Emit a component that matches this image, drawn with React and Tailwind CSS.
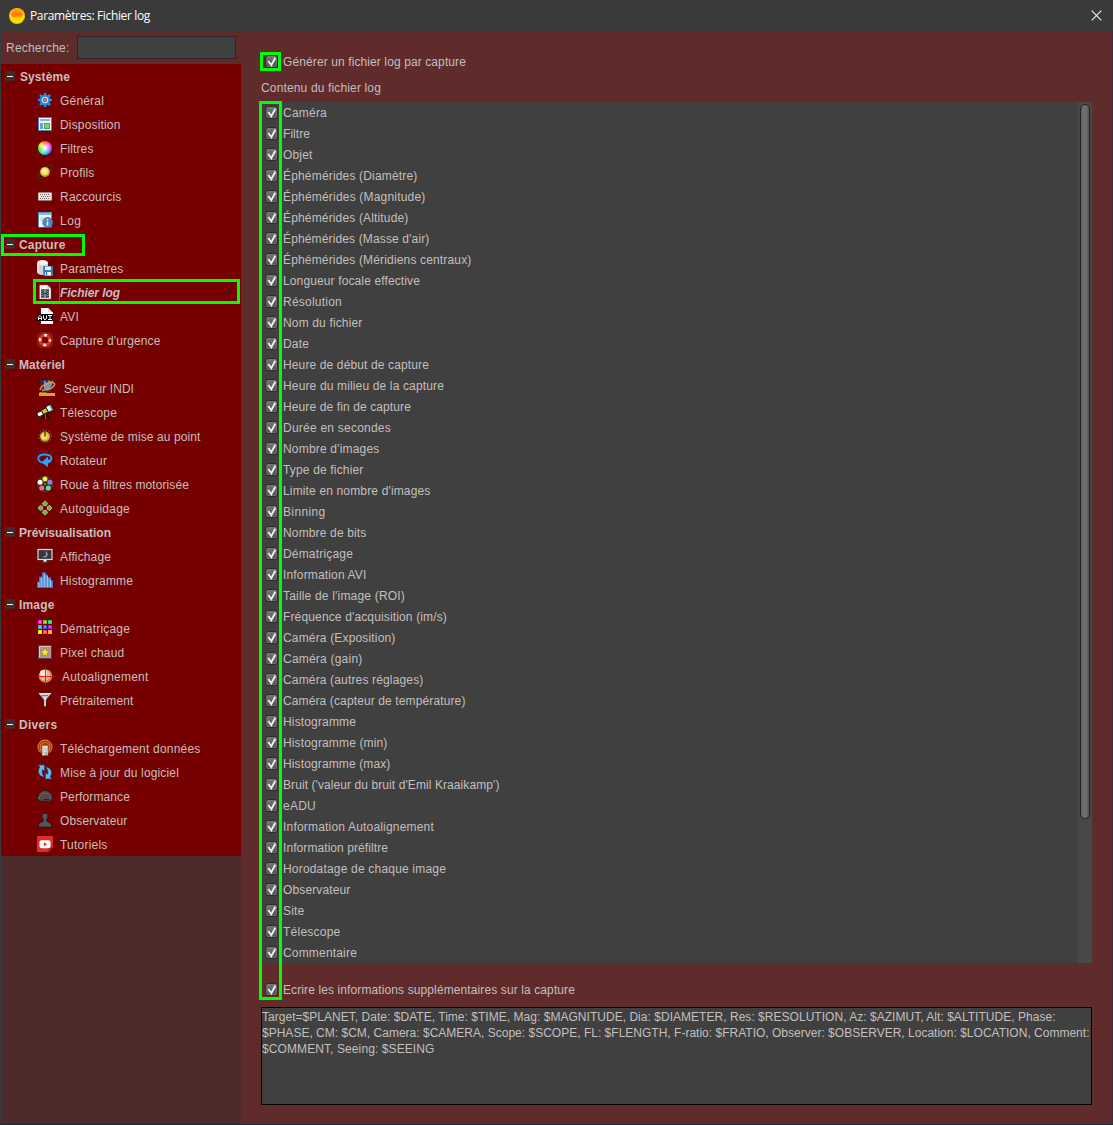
import React, { useLayoutEffect, useRef, useState } from 'react';

/* Text set to a given width by distributing tracking between its letters. */
function Label({ w, className = '', children }) {
  const ref = useRef(null);
  const [spacing, setSpacing] = useState(0);
  useLayoutEffect(() => {
    const natural = ref.current.getBoundingClientRect().width;
    setSpacing((w - natural) / children.length);
  }, []);
  return (
    <span ref={ref} className={`whitespace-pre ${className}`} style={{ letterSpacing: `${spacing}px` }}>
      {children}
    </span>
  );
}

const grid9 = ['#ff10e8', '#78c000', '#10d860', '#20a8ff', '#2058e8', '#a010f8', '#ffd800', '#f04830', '#ffa030'];

const icons = {
  gear: (
    <>
      <g stroke="#1491ee" strokeWidth="2.6">
        <path d="M8 1V15M1 8H15M3 3l10 10M13 3l-10 10" />
      </g>
      <circle cx="8" cy="8" r="5.2" fill="#168fe8" />
      <circle cx="8" cy="8" r="2.6" fill="#7c3f55" stroke="#d3d3dc" strokeWidth="1.3" />
      <circle cx="8" cy="8" r="1" fill="#c2a9af" />
    </>
  ),
  layout: (
    <>
      <rect x="1" y="1" width="14" height="14" fill="#4a7fc4" />
      <rect x="2" y="2" width="12" height="12" fill="#f4f8ff" />
      <rect x="3" y="3" width="10" height="2" fill="#86b2ee" />
      <rect x="3" y="7" width="3" height="6" fill="#6c9fe0" />
      <rect x="7" y="7" width="6" height="6" fill="#46a843" />
      <rect x="8" y="8" width="4" height="4" fill="#85cf73" />
    </>
  ),
  log: (
    <>
      <rect x="1" y="0" width="14" height="15.5" fill="#5a91c6" />
      <rect x="2" y="3" width="12" height="12" fill="#f3f7fb" />
      <rect x="2" y="1" width="12" height="2" fill="#87b8e8" />
      <path d="M3 6h6M3 8h3" stroke="#b6c2cf" />
      <circle cx="10.7" cy="10.5" r="5" fill="#5189ba" stroke="#396c9b" strokeWidth=".7" />
      <path d="M10.5 9.5v4M10.5 7v1.3" stroke="#fff" strokeWidth="1.5" />
    </>
  ),
  planet: (
    <>
      <ellipse cx="8" cy="8" rx="9.3" ry="3" transform="rotate(-43 8 8)" fill="#401008" stroke="#63270d" />
      <circle cx="8" cy="8" r="5" fill="#c99b18" />
      <circle cx="7.7" cy="7.3" r="3.9" fill="#f7df62" />
      <circle cx="7.2" cy="6.6" r="2.1" fill="#fff6a8" />
    </>
  ),
  keyboard: (
    <>
      <path d="M7 4V2h3" fill="none" stroke="#4b1010" />
      <rect x="1" y="4.2" width="14" height="8.5" rx="1" fill="#e6e2e0" stroke="#5f2929" strokeWidth=".5" />
      <g stroke="#706b6b" strokeDasharray="1 1">
        <path d="M3 6.5h10M4 8.5h9M3 10.5h10" />
      </g>
    </>
  ),
  save: (
    <>
      <path d="M0 3C0-1 11-1 11 3v9c0 4-11 4-11 0z" fill="#d4d1cf" />
      <ellipse cx="5.5" cy="2.7" rx="5" ry="2.2" fill="#faf7f4" />
      <path d="M1 4v8" stroke="#fff" />
      <rect x="6.3" y="6" width="9.7" height="10" fill="#3674bd" />
      <rect x="8" y="6.5" width="6" height="3.6" fill="#dcefff" />
      <rect x="8" y="12" width="6" height="3.5" fill="#f5f9fb" />
      <path d="M9.5 12v3.5" stroke="#3674bd" strokeWidth="1.3" />
    </>
  ),
  filelog: (
    <>
      <path d="M2.5 1h8L14 4.3V15H2.5z" fill="#f3f4f4" stroke="#686868" strokeWidth=".5" />
      <path d="M10.5 1v3.5H14" fill="#b9bcbd" />
      <rect x="4" y="5" width="8" height="9" fill="#32383a" />
      <rect x="6.5" y="5" width="3" height="4" fill="#7c8a90" />
      <rect x="6.5" y="10" width="3" height="4" fill="#7c8a90" />
      <path d="M5 5v9M11 5v9" stroke="#ddd" strokeWidth=".9" strokeDasharray="1 1" />
    </>
  ),
  avi: (
    <>
      <path d="M4 0h7l4 4h1v12H4z" fill="#fff" />
      <path d="M11 0v4h4z" fill="#dadada" />
      <rect x="0" y="6" width="16" height="7" fill="#050505" />
      <path d="M1.5 12V9L3 7.5 4.5 9v3M1.5 10.5h3M6.5 7.5V10L8 12l1.5-2V7.5M11 7.5h4M13 7.5v4M11 11.5h4" fill="none" stroke="#fff" />
    </>
  ),
  buoy: (
    <>
      <rect x="1" y="1" width="14" height="14" rx="3" fill="#6b1005" stroke="#a6430d" strokeWidth=".8" />
      <circle cx="8" cy="8" r="4.9" fill="none" stroke="#e0302a" strokeWidth="3.4" />
      <circle cx="8" cy="8" r="4.9" fill="none" stroke="#ffe6e2" strokeWidth="2.6" strokeDasharray="2.8 4.9" strokeDashoffset="1.4" />
      <circle cx="8" cy="8" r="2.8" fill="#790000" />
    </>
  ),
  indi: (
    <>
      <path d="M1 0h14v8l-4 4-8-1z" fill="#273052" />
      <path d="M5 0l3 3 2-3 2 2 2-2-1 5-4 6-4-2z" fill="#7b94bb" />
      <path d="M1 10C2 5 12 1 15 3s-4 8-12 7" fill="none" stroke="#f3942c" strokeWidth="1.4" />
      <path d="M0 13l5-2 3 2h8v3H0z" fill="#e99a28" />
      <path d="M3 12l8-1 2 1" stroke="#37294d" strokeWidth="1.5" fill="none" />
    </>
  ),
  telescope: (
    <>
      <path d="M7.5 9l-2 6M9 9l3 6M8.5 9v6" stroke="#111" strokeWidth="1.3" />
      <path d="M8.5 10v5" stroke="#a4a4a4" strokeWidth=".6" />
      <g transform="rotate(-28 8 7)">
        <rect x="-.5" y="5" width="6" height="4.5" fill="#fff" stroke="#171717" />
        <rect x="5" y="4.5" width="6" height="5" fill="#f5b32a" stroke="#171717" />
        <rect x="10.5" y="3.5" width="5.5" height="6.5" fill="#fff" stroke="#171717" />
        <path d="M15 4v6" stroke="#49b1b7" strokeWidth="1.5" />
      </g>
    </>
  ),
  focus: (
    <>
      <circle cx="8" cy="8" r="6.3" fill="none" stroke="#4769a1" strokeWidth="1.2" strokeDasharray="1.2 2.1" />
      <circle cx="8" cy="8.7" r="5.3" fill="#80570d" />
      <circle cx="8" cy="8.3" r="4.8" fill="#dcb42a" />
      <circle cx="7.3" cy="8.5" r="3.2" fill="#f3dd68" />
      <path d="M8 3.5v5" stroke="#56420b" strokeWidth="1.5" />
    </>
  ),
  rotate: (
    <>
      <path d="M6 10.5C-1 9.500 0 2.500 7.500 2.500s8 4.500 5.500 6.500" fill="none" stroke="#1f9bff" strokeWidth="2" />
      <path d="M4.500 10.500L11 4.500V7.500H14V10L11 11.500V15z" fill="#2a9fff" />
    </>
  ),
  wheel: (
    <>
      <circle cx="8" cy="8" r="7.6" fill="#322b29" stroke="#5a4640" strokeWidth=".8" />
      <circle cx="8" cy="8" r="1.3" fill="#806348" />
      <circle cx="8" cy="2.9" r="2.5" fill="#eded45" />
      <circle cx="12.900" cy="6.300" r="2.5" fill="#8f82df" />
      <circle cx="11.3" cy="12" r="2.5" fill="#69dc86" />
      <circle cx="4.8" cy="12" r="2.5" fill="#f16e6c" />
      <circle cx="3.100" cy="6.3" r="2.5" fill="#fff" />
    </>
  ),
  guide: (
    <g fill="#5cc02a" stroke="#b9c4b4" strokeWidth=".9">
      <path d="M8 1l2.600 2.400L9.300 5.600H6.700L5.400 3.400z" />
      <path d="M15 8l-2.400 2.600-2.200-1.300V6.700l2.200-1.300z" />
      <path d="M8 15l-2.600-2.400 1.300-2.200h2.600l1.300 2.200z" />
      <path d="M1 8l2.400-2.600 2.200 1.300v2.600l-2.200 1.300z" />
    </g>
  ),
  screen: (
    <>
      <rect x="1" y="1.5" width="14" height="10" fill="#34383d" stroke="#d9d6d6" strokeWidth="1.2" />
      <path d="M8 3.2a3.2 3.2 0 1 1-2.8 5.3C9 9 10 6 8 3.2" fill="#9299ab" />
      <path d="M8 12v2" stroke="#eee" strokeWidth="3" />
      <path d="M4 14.5h8" stroke="#423333" strokeWidth="1.5" />
    </>
  ),
  histogram: (
    <>
      <path d="M.5 15.5V10h2V5h3V.8h3v2h2v3h3v3h2v6.7z" fill="#5f95d8" stroke="#3d75cc" />
      <path d="M2 10.5V15M4.5 6v9M7.5 2v13M10.5 4v11M13.5 7.5V15" stroke="#9abfeb" />
    </>
  ),
  mosaic: grid9.map((c, i) => (
    <g key={c}>
      <rect x={1 + (i % 3) * 5} y={Math.floor(i / 3) * 5} width="4" height="4" fill={c} />
      <rect x={2 + (i % 3) * 5} y={1 + Math.floor(i / 3) * 5} width="2" height="2" fill="#fff" opacity=".35" />
    </g>
  )),
  star: (
    <>
      <rect x="1.5" y="1.5" width="13" height="13" fill="#b0939a" stroke="#573b4f" />
      <path d="M2.5 13.5v-11h11" stroke="#dec3c5" fill="none" />
      <path d="M8 3.5l1.4 3 3.2.4-2.4 2.2.7 3.3L8 10.8l-2.9 1.6.7-3.3-2.4-2.2 3.2-.4z" fill="#f5e33c" stroke="#8b7912" strokeWidth=".6" />
    </>
  ),
  align: (
    <>
      <circle cx="8.5" cy="8" r="6.8" fill="#bd895e" />
      <circle cx="7.800" cy="7.200" r="5.5" fill="#dfba94" />
      <circle cx="6.5" cy="5.500" r="3.400" fill="#fbe8ce" />
      <path d="M8.5-.5v17M0 8.5h17" stroke="#f20b0b" strokeWidth=".9" />
    </>
  ),
  filter: (
    <>
      <path d="M1.5 1.2h13L9 8v7H7V8z" fill="#c4c4c8" stroke="#3d3030" strokeWidth=".5" />
      <path d="M2 1.7h12M8 5v9" stroke="#f5f5f5" />
      <path d="M5 3.5h6" stroke="#777" />
      <path d="M5.5 15h5" stroke="#3a1010" />
    </>
  ),
  download: (
    <>
      <circle cx="8" cy="7" r="7" fill="#9c3a12" />
      <g fill="none" stroke="#df7430" strokeWidth="1.1">
        <path d="M3.5 12.500a7 7 0 1 1 9 0M5 11a4.8 4.8 0 1 1 6 0" />
      </g>
      <path d="M5 5.500h6v10H5z" fill="#e2ded3" stroke="#75645d" strokeWidth=".6" />
      <path d="M6 8.5h4M6 10.5h4M6 12.5h4" stroke="#aaa" strokeWidth=".7" />
      <path d="M8 14h2" stroke="#35a037" />
    </>
  ),
  update: (
    <g fill="#65b7f3" stroke="#1b4e7e" strokeWidth=".7">
      <path d="M1 1h6.500v6.500L5.600 5.600C4.500 8 5 10 7.200 13 1.500 12.500 0 7 3 3z" />
      <path d="M15 15H8.500V8.500l1.900 1.900C11.500 8 11 6 8.800 3c5.700.5 7.200 6 4.200 10z" />
    </g>
  ),
  gauge: (
    <>
      <path d="M.8 11.8C0 6 4 2.5 8 2.5S16 6 15.2 11.8L13 13.2H3z" fill="#4a4b4d" stroke="#191919" strokeWidth=".8" />
      <path d="M2.5 10.3c.5-7 10.5-7 11 0" fill="none" stroke="#929292" strokeDasharray="1 1.5" />
      <path d="M4 5l6 7" stroke="#c82b25" />
      <path d="M7 11.5h5" stroke="#222" />
    </>
  ),
  person: (
    <path d="M8 1.2c2.5 0 3.4 2 2.7 4.2-.3 1.2-1.3 1.8-1.2 3.3.2 1.7 4.5 1.2 5 4.6V15h-13v-1.7c.5-3.4 4.8-2.9 5-4.6.1-1.5-.9-2.1-1.2-3.3C4.6 3.2 5.5 1.2 8 1.2z" fill="#555657" stroke="#1d1d1d" strokeWidth=".9" />
  ),
  video: (
    <>
      <path d="M0 0h16v11.5L11.5 16H0z" fill="#d93128" />
      <path d="M16 11.5h-4.5V16z" fill="#98201c" />
      <rect x="2.5" y="4.2" width="11" height="8" rx="2" fill="#fff" />
      <path d="M6.8 6.2v4l3.3-2z" fill="#d93128" />
    </>
  ),
};

function Icon({ name }) {
  if (name === 'color') {
    return (
      <span className="flex size-4 items-center justify-center">
        <span className="size-3.5 rounded-full bg-[radial-gradient(circle,white_5%,transparent_65%),conic-gradient(#ff5038,#ff40c8,#8048ff,#2090ff,#20e8c0,#40f020,#e8f020,#ff5038)]" />
      </span>
    );
  }
  return <svg viewBox="0 0 16 16" className="size-4 shrink-0 overflow-visible">{icons[name]}</svg>;
}

const groups = [
  ['Système', 50, [
    ['gear', 'Général', 44], ['layout', 'Disposition', 60.5], ['color', 'Filtres', 33.5], ['planet', 'Profils', 34.5],
    ['keyboard', 'Raccourcis', 61.5], ['log', 'Log', 21.5],
  ]],
  ['Capture', 46.5, [
    ['save', 'Paramètres', 63.5], ['filelog', 'Fichier log', 60], ['avi', 'AVI', 19], ['buoy', "Capture d'urgence", 100.5],
  ]],
  ['Matériel', 46, [
    ['indi', 'Serveur INDI', 70], ['telescope', 'Télescope', 57], ['focus', 'Système de mise au point', 140.5],
    ['rotate', 'Rotateur', 47], ['wheel', 'Roue à filtres motorisée', 129], ['guide', 'Autoguidage', 70],
  ]],
  ['Prévisualisation', 92, [['screen', 'Affichage', 51], ['histogram', 'Histogramme', 73]]],
  ['Image', 35.5, [
    ['mosaic', 'Dématriçage', 70], ['star', 'Pixel chaud', 64.5], ['align', 'Autoalignement', 86.5], ['filter', 'Prétraitement', 73.5],
  ]],
  ['Divers', 38.5, [
    ['download', 'Téléchargement données', 140.5], ['update', 'Mise à jour du logiciel', 119], ['gauge', 'Performance', 70],
    ['person', 'Observateur', 67.5], ['video', 'Tutoriels', 47.5],
  ]],
];

const fields = [
  ['Caméra', 44], ['Filtre', 27], ['Objet', 29.5], ['Éphémérides (Diamètre)', 134.5], ['Éphémérides (Magnitude)', 142.5],
  ['Éphémérides (Altitude)', 125.5], ["Éphémérides (Masse d'air)", 146.5], ['Éphémérides (Méridiens centraux)', 188.5],
  ['Longueur focale effective', 137], ['Résolution', 59], ['Nom du fichier', 79.5], ['Date', 26],
  ['Heure de début de capture', 146], ['Heure du milieu de la capture', 161], ['Heure de fin de capture', 128],
  ['Durée en secondes', 108], ["Nombre d'images", 96.5], ['Type de fichier', 80.5], ["Limite en nombre d'images", 147.5],
  ['Binning', 42.5], ['Nombre de bits', 83.5], ['Dématriçage', 70], ['Information AVI', 83.5], ["Taille de l'image (ROI)", 122],
  ["Fréquence d'acquisition (im/s)", 164], ['Caméra (Exposition)', 112.5], ['Caméra (gain)', 79.5],
  ['Caméra (autres réglages)', 140.5], ['Caméra (capteur de température)', 182.5], ['Histogramme', 73],
  ['Histogramme (min)', 104.5], ['Histogramme (max)', 107.5], ["Bruit ('valeur du bruit d'Emil Kraaikamp')", 216.5], ['eADU', 33],
  ['Information Autoalignement', 151], ['Information préfiltre', 105], ['Horodatage de chaque image', 163],
  ['Observateur', 67.5], ['Site', 21.5], ['Télescope', 57.5], ['Commentaire', 74],
];

const template = [
  ['Target=$PLANET, Date: $DATE, Time: $TIME, Mag: $MAGNITUDE, Dia: $DIAMETER, Res: $RESOLUTION, Az: $AZIMUT, Alt: $ALTITUDE, Phase:', 793.5],
  ['$PHASE, CM: $CM, Camera: $CAMERA, Scope: $SCOPE, FL: $FLENGTH, F-ratio: $FRATIO, Observer: $OBSERVER, Location: $LOCATION, Comment:', 827.5],
  ['$COMMENT, Seeing: $SEEING', 172.5],
];

function Check() {
  return (
    <svg viewBox="0 0 13 13" className="size-[13px] shrink-0">
      <defs>
        <linearGradient id="box" x2="0" y2="1">
          <stop stopColor="#777" />
          <stop offset="1" stopColor="#4c4c4c" />
        </linearGradient>
      </defs>
      <rect x=".9" y=".7" width="11.400" height="11.900" rx="2" fill="url(#box)" stroke="#262626" />
      <rect x="1.800" y="1.600" width="9.600" height="10" rx="1" fill="none" stroke="#8a8a8a" strokeWidth=".6" />
      <path d="M3.300 6l3 4.200L10.300 2.800" fill="none" stroke="#f2f2f2" strokeWidth="1.8" />
    </svg>
  );
}

function CheckRow({ label, w }) {
  return (
    <div className="flex h-[21px] items-center gap-[5px] pl-1">
      <Check />
      <Label w={w}>{label}</Label>
    </div>
  );
}

function Sidebar() {
  return (
    <aside className="flex w-[241px] shrink-0 flex-col border-l border-[#363c3e] bg-[#4e2b2b]">
      <div className="flex h-[33px] shrink-0 items-center bg-[#5e2b2b] pl-[5px]">
        <Label w={63.5}>Recherche:</Label>
        <div className="ml-[7.5px] h-[23px] w-[159px] border border-[#272727] bg-[#404040]" />
      </div>
      <nav className="bg-[#760000]">
        {groups.map(([title, tw, items]) => (
          <section key={title}>
            <div className="relative flex h-6 items-center pl-1">
              <span className="flex size-[10px] items-center justify-center rounded-[2px] bg-[#472b2b]">
                <span className="h-px w-1.5 bg-[#f4f4f4]" />
              </span>
              <Label w={tw} className={title === 'Système' ? 'ml-[5px] mt-0.5 font-bold' : 'ml-1 mt-0.5 font-bold'}>{title}</Label>
              {title === 'Capture' && <span className="absolute left-0 top-[2px] h-[22px] w-[84px] border-3 border-[#00ff00]" />}
            </div>
            {items.map(([icon, label, w]) => (
              <div
                key={label}
                className={`relative flex h-6 items-center ${icon === 'indi' ? 'gap-[9px] pl-[38px]' : icon === 'align' ? 'gap-[9px] pl-9' : 'gap-[7px] pl-9'}`}
              >
                <Icon name={icon} />
                <Label w={w} className={icon === 'filelog' ? 'mt-0.5 font-bold italic' : 'mt-0.5'}>{label}</Label>
                {icon === 'filelog' && (
                  <>
                    <span className="absolute left-[58px] top-[2px] h-5 w-px bg-[#a03a3a]" />
                    <span className="absolute -top-px left-8 h-[25px] w-[207px] border-3 border-[#00ff00]" />
                  </>
                )}
              </div>
            ))}
          </section>
        ))}
      </nav>
    </aside>
  );
}

export default function App() {
  return (
    <div className="flex h-[1125px] w-[1113px] flex-col overflow-hidden border-b border-[#192c40] bg-[#5f2b2b] font-['Liberation_Sans',Arial,sans-serif] text-[12px] leading-4 text-[#c4bfbf]">
      <header className="flex h-[31px] shrink-0 items-center bg-[#3a3a3a] pl-[9px] text-white">
        <svg viewBox="0 0 16 16" className="size-4 overflow-visible">
          <circle cx="8" cy="8" r="8" fill="#ffc400" />
          <circle cx="8" cy="7.8" r="7" fill="#ffe100" />
          <path d="M1.5 6Q3 .5 8.5 1t6 5.5L12 10 8 9l-3 1-3-2z" fill="#ff9a14" />
          <path d="M3 5l4-2 1 2 4-1 1 3-3 1-2-1-3 2-2-1z" fill="#ff7a08" />
        </svg>
        <Label w={120} className="ml-[5px] mt-px font-['Open_Sans',sans-serif]">Paramètres: Fichier log</Label>
        <svg viewBox="0 0 11 11" className="ml-auto mr-[11px] size-[11px]">
          <path d="M.7.7l9.6 9.6M10.3.7L.7 10.3" stroke="#f5f5f5" strokeWidth="1.1" />
        </svg>
      </header>
      <div className="flex min-h-0 flex-1">
        <Sidebar />
        <main className="relative flex-1 border-r border-[#3c3032] pl-5 pt-5">
          <CheckRow label="Générer un fichier log par capture" w={183} />
          <div className="mb-1.5 mt-2 h-4">
            <Label w={120}>Contenu du fichier log</Label>
          </div>
          <div className="flex h-[861px] w-[831px] justify-between bg-[#404040]">
            <div>
              {fields.map(([label, w]) => (
                <CheckRow key={label} label={label} w={w} />
              ))}
            </div>
            <div className="w-3.5 bg-[#484848] px-0.5 pt-0.5">
              <div className="h-[715px] rounded-full border border-[#222] bg-linear-to-r from-[#626262] via-[#727272] to-[#565656]" />
            </div>
          </div>
          <div className="mt-4">
            <CheckRow label="Ecrire les informations supplémentaires sur la capture" w={292} />
          </div>
          <div className="mt-[7px] flex h-[98px] w-[831px] flex-col items-start border border-black bg-[#404040] pt-px">
            {template.map(([line, w]) => (
              <Label key={line} w={w}>{line}</Label>
            ))}
          </div>
          <span className="absolute left-[19px] top-[21px] h-[19px] w-[21px] border-3 border-[#00ff00]" />
          <span className="absolute left-[18px] top-[70px] h-[899px] w-[23px] border-3 border-[#00ff00]" />
        </main>
      </div>
    </div>
  );
}
